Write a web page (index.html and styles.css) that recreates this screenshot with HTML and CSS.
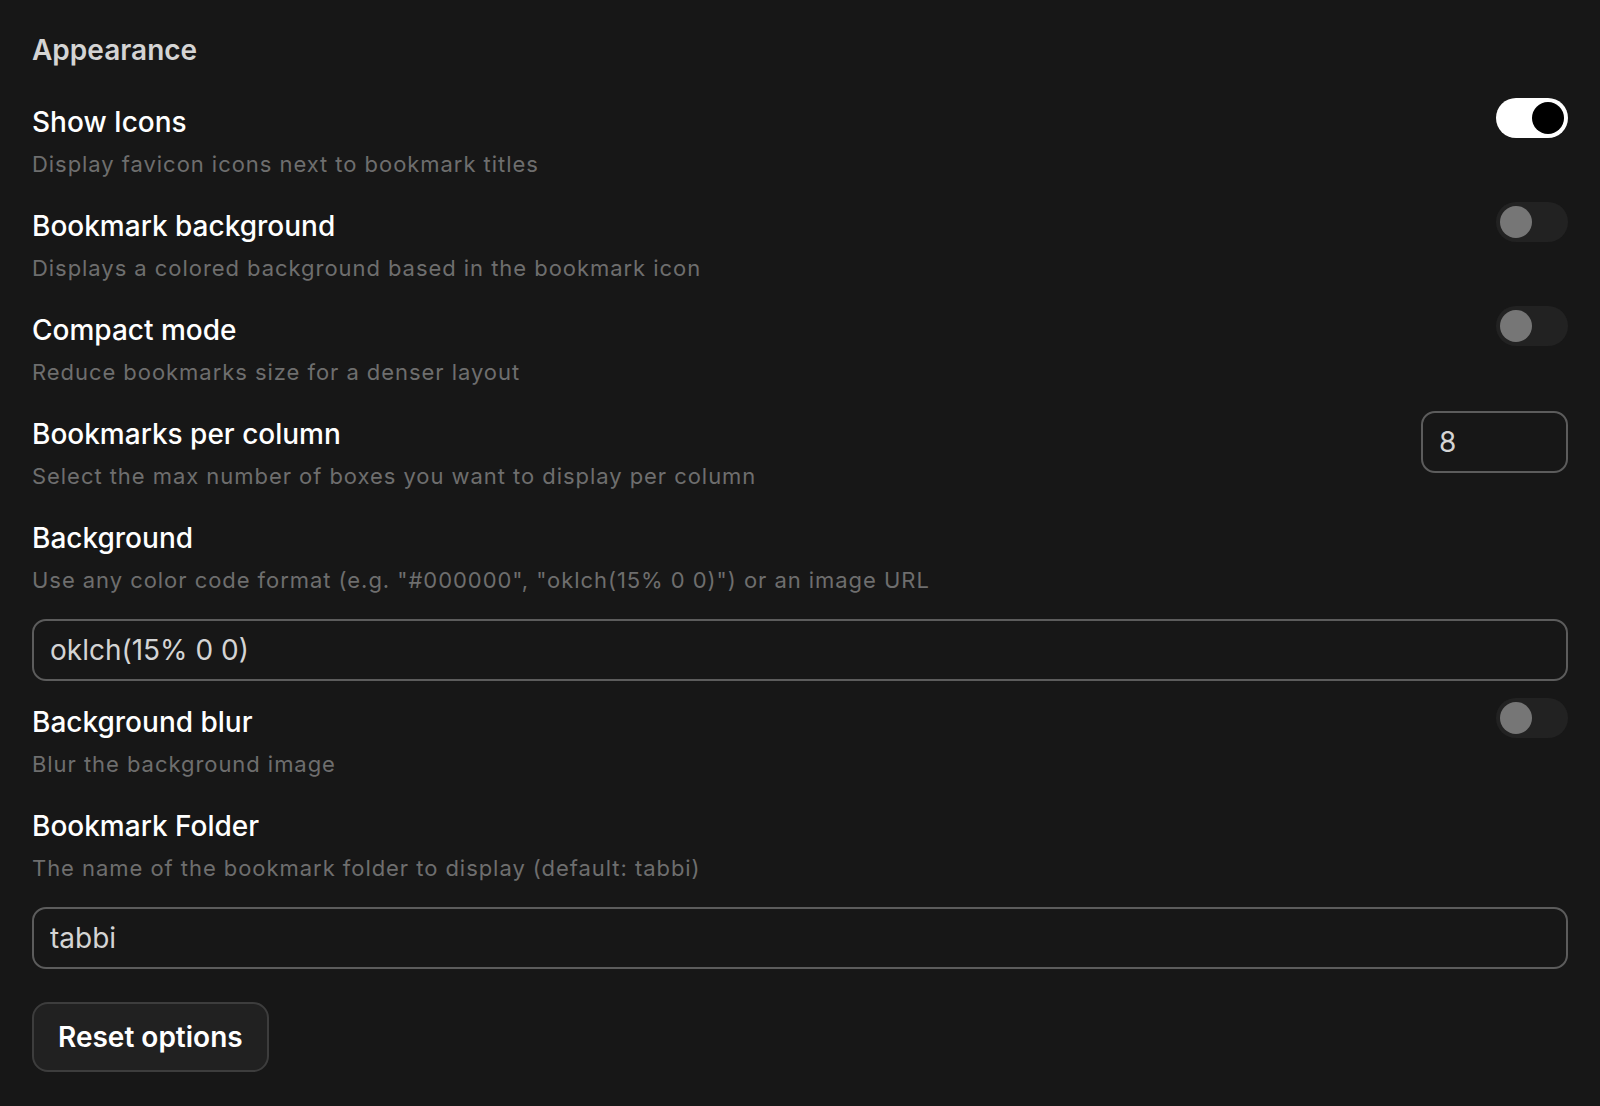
FILE: index.html
```html
<!DOCTYPE html>
<html lang="en">
<head>
    <meta charset="UTF-8">
    <meta name="viewport" content="width=device-width, initial-scale=1.0">
    <title>Options</title>
    <link rel="stylesheet" href="styles.css">
</head>
<body>
    <div class="container">
        <h2 class="section-title">Appearance</h2>
        <div class="settings">
            <div class="row">
                <div class="row-text">
                    <div class="row-title">Show Icons</div>
                    <div class="row-desc">Display favicon icons next to bookmark titles</div>
                </div>
                <label class="toggle on"><span class="knob"></span></label>
            </div>
            <div class="row">
                <div class="row-text">
                    <div class="row-title">Bookmark background</div>
                    <div class="row-desc">Displays a colored background based in the bookmark icon</div>
                </div>
                <label class="toggle"><span class="knob"></span></label>
            </div>
            <div class="row">
                <div class="row-text">
                    <div class="row-title">Compact mode</div>
                    <div class="row-desc">Reduce bookmarks size for a denser layout</div>
                </div>
                <label class="toggle"><span class="knob"></span></label>
            </div>
            <div class="row">
                <div class="row-text">
                    <div class="row-title">Bookmarks per column</div>
                    <div class="row-desc">Select the max number of boxes you want to display per column</div>
                </div>
                <input class="field number" type="number" value="8">
            </div>
            <div class="row">
                <div class="row-text">
                    <div class="row-title">Background</div>
                    <div class="row-desc">Use any color code format (e.g. "#000000", "oklch(15% 0 0)") or an image URL</div>
                </div>
            </div>
            <input class="field wide after-gap" type="text" value="oklch(15% 0 0)">
            <div class="row">
                <div class="row-text">
                    <div class="row-title">Background blur</div>
                    <div class="row-desc">Blur the background image</div>
                </div>
                <label class="toggle"><span class="knob"></span></label>
            </div>
            <div class="row">
                <div class="row-text">
                    <div class="row-title">Bookmark Folder</div>
                    <div class="row-desc">The name of the bookmark folder to display (default: tabbi)</div>
                </div>
            </div>
            <input class="field wide" type="text" value="tabbi">
            <div>
                <button class="reset-btn">Reset options</button>
            </div>
        </div>
    </div>
</body>
</html>
```

FILE: styles.css
```css
body {
    margin: 0;
    background-color: #171717;
    font-family: Inter, 'Noto Sans', sans-serif;
    color: #ffffff;
}
.container {
    padding: 30px 32px;
}
.section-title {
    margin: 0 0 28px;
    font-size: 28px;
    line-height: 40px;
    font-weight: 600;
    color: #d4d4d4;
}
.settings {
    display: flex;
    flex-direction: column;
    gap: 21px;
}
.row {
    display: flex;
    justify-content: space-between;
    align-items: flex-start;
}
.row-text {
    padding-top: 4px;
}
.row-title {
    font-size: 28px;
    line-height: 40px;
    font-weight: 500;
}
.row-desc {
    margin-top: 6px;
    font-size: 22px;
    line-height: 33px;
    letter-spacing: 0.95px;
    color: #6e6e6e;
}
.toggle {
    display: flex;
    align-items: center;
    width: 72px;
    height: 40px;
    padding: 0 4px;
    box-sizing: border-box;
    border-radius: 20px;
    background-color: #222222;
    cursor: pointer;
}
.toggle .knob {
    width: 32px;
    height: 32px;
    border-radius: 50%;
    background-color: #767676;
}
.toggle.on {
    background-color: #ffffff;
    justify-content: flex-end;
}
.toggle.on .knob {
    background-color: #000000;
}
.field {
    box-sizing: border-box;
    height: 62px;
    padding: 0 16px;
    border: 2px solid #5c5c5c;
    border-radius: 14px;
    background-color: #171717;
    color: #d4d4d4;
    font-family: inherit;
    font-size: 28px;
    outline: none;
}
.field.number {
    width: 147px;
    margin-top: 1px;
}
.field.number::-webkit-inner-spin-button,
.field.number::-webkit-outer-spin-button {
    -webkit-appearance: none;
    margin: 0;
}
.field.wide {
    width: 100%;
    margin-top: 1px;
}
.field.after-gap {
    margin-bottom: -4px;
}
.reset-btn {
    margin-top: 12px;
    height: 70px;
    padding: 0 24px;
    border: 2px solid #3d3d3d;
    border-radius: 16px;
    background-color: #212121;
    color: #ffffff;
    font-family: inherit;
    font-size: 28px;
    font-weight: 600;
    cursor: pointer;
}
```
